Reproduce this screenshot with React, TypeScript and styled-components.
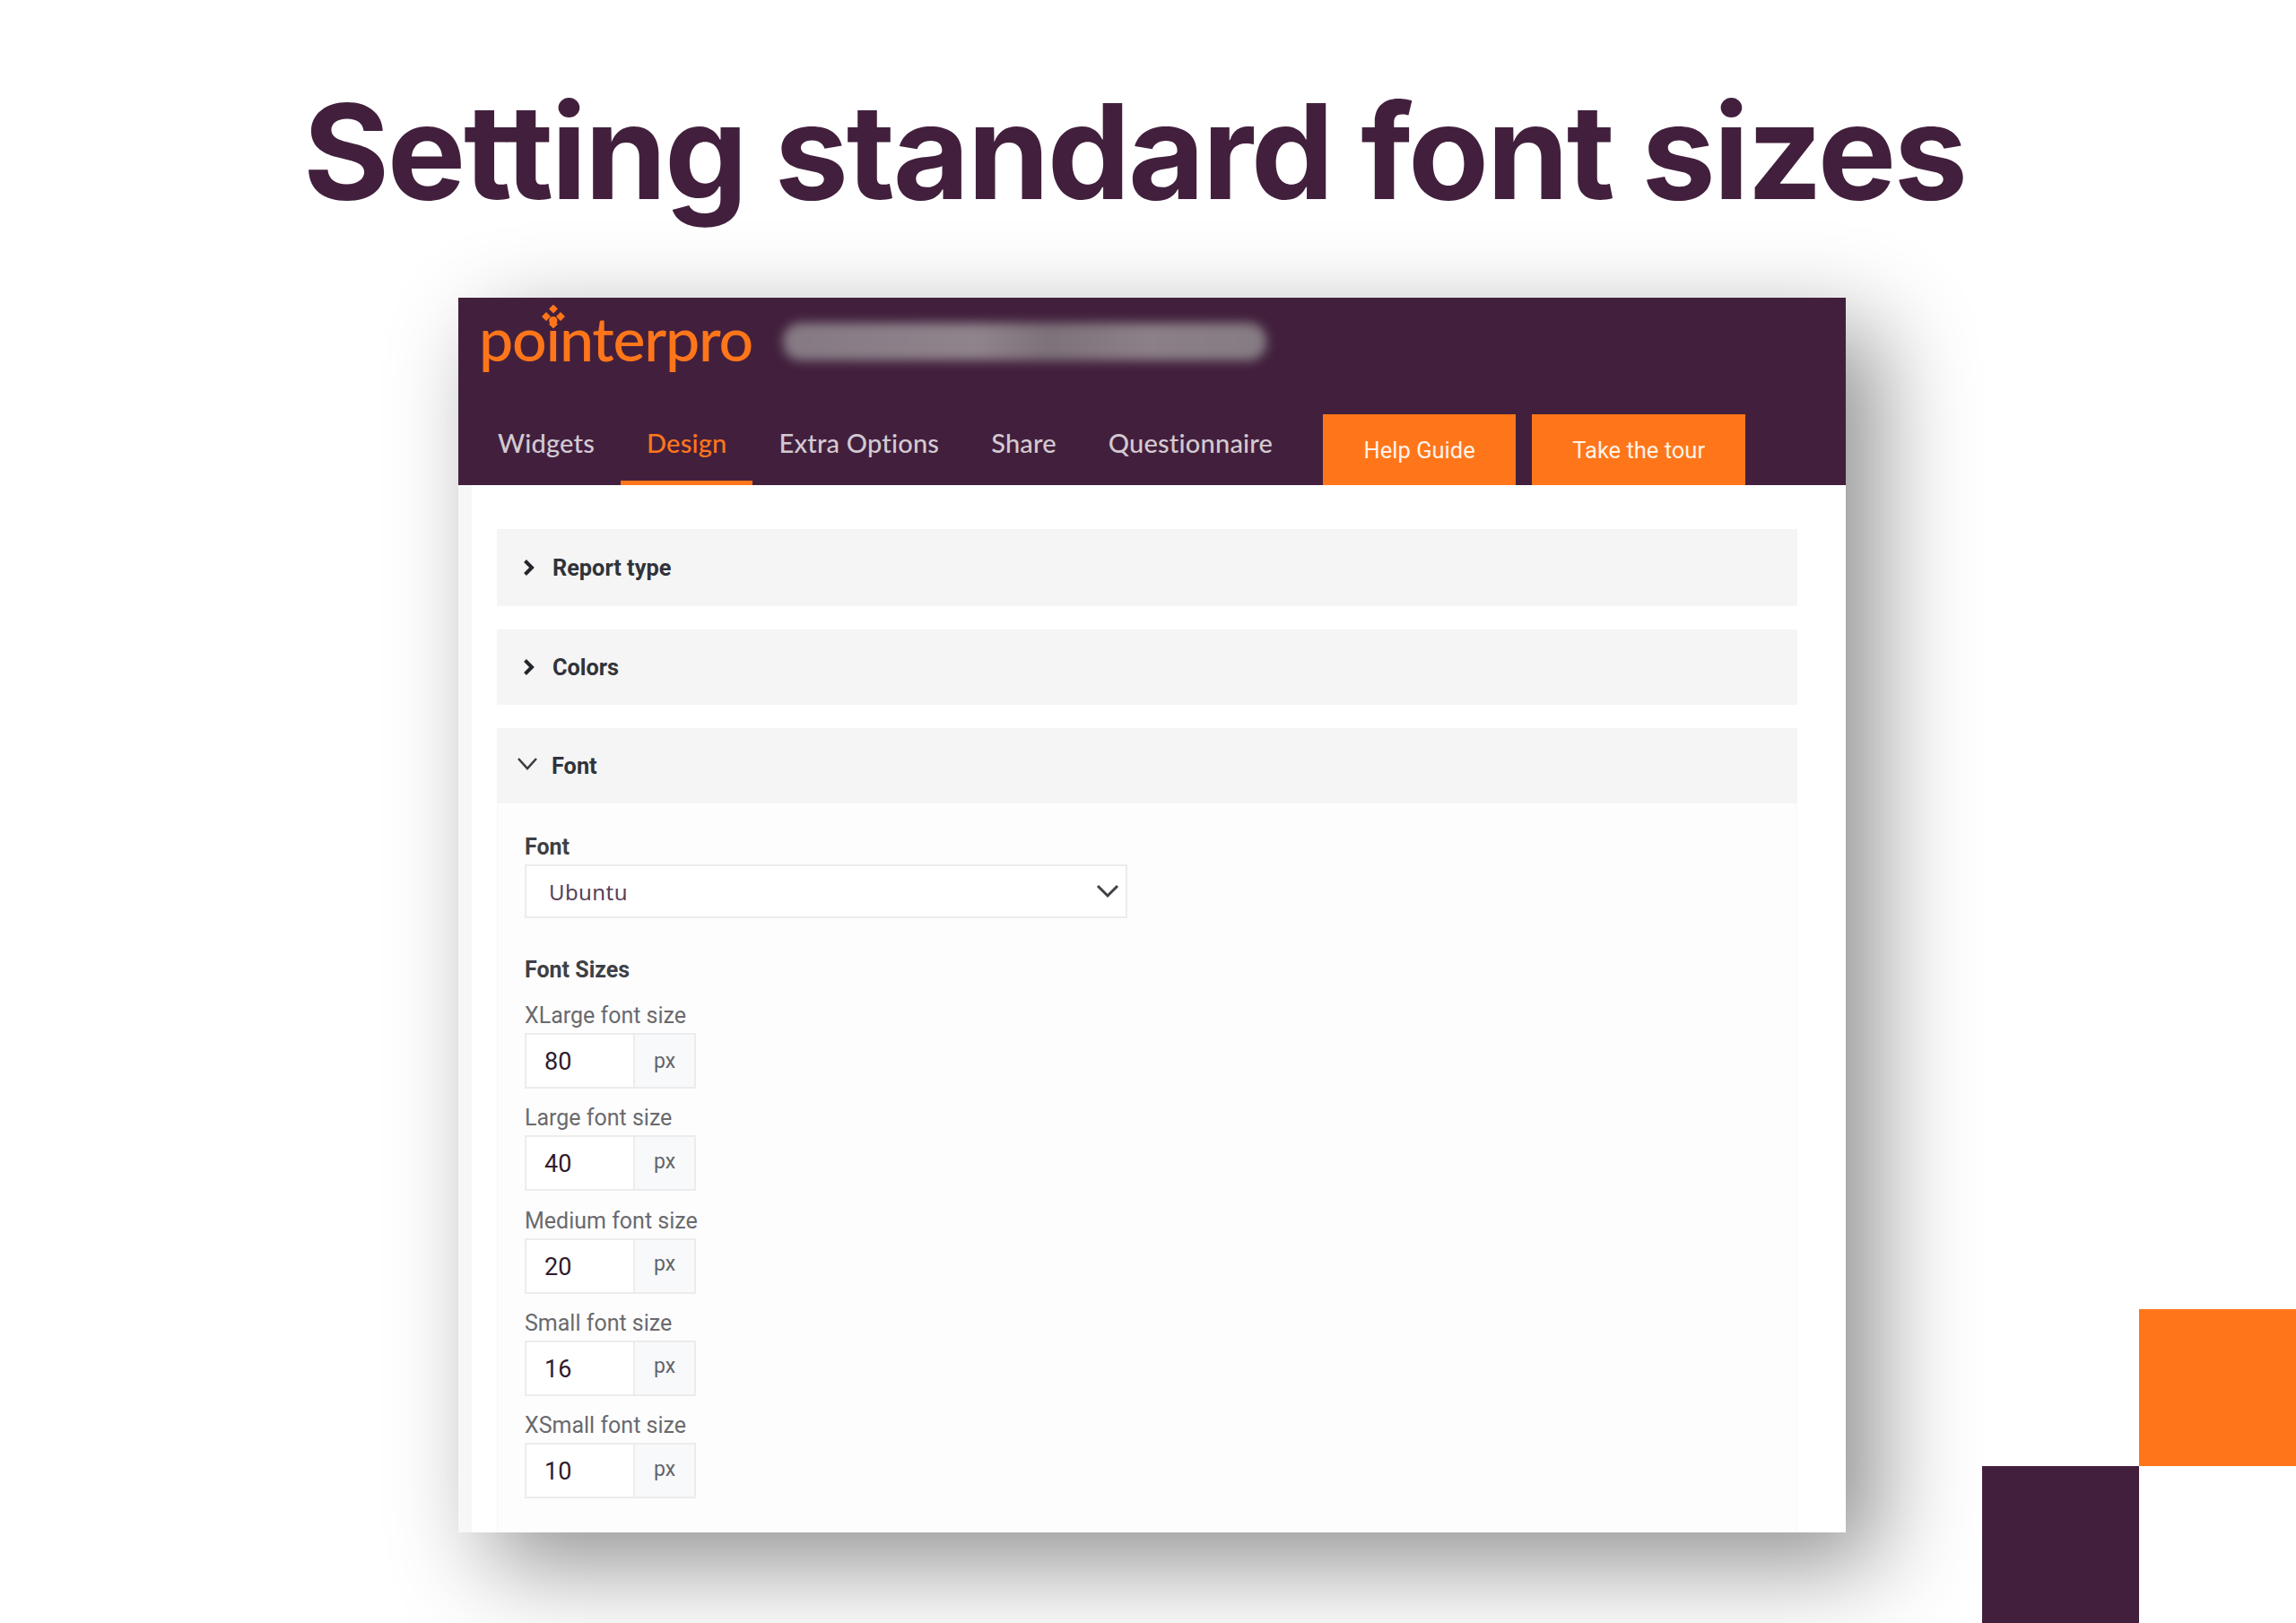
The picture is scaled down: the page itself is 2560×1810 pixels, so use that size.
import React from "react";
import styled, { createGlobalStyle } from "styled-components";

const PURPLE = "#42203d";
const ORANGE = "#ff761a";

const GlobalStyle = createGlobalStyle`
  html, body {
    margin: 0;
    padding: 0;
    background: #ffffff;
  }
`;

const Page = styled.div`
  position: relative;
  width: 2560px;
  height: 1810px;
  overflow: hidden;
  background: #ffffff;
  font-family: Roboto, "Liberation Sans", sans-serif;
`;

const Title = styled.h1`
  margin: 0;
  height: 332px;
  padding: 86px 0 0 338px;
  box-sizing: border-box;
  font-family: Inter, Lato, sans-serif;
  font-weight: 700;
  font-size: 147px;
  line-height: 166px;
  letter-spacing: -2.45px;
  color: ${PURPLE};
  white-space: nowrap;
`;

const Card = styled.section`
  width: 1547px;
  height: 1377px;
  margin-left: 511px;
  background: #ffffff;
  box-shadow: 35px 35px 100px rgba(0, 0, 0, 0.44);
  display: flex;
  flex-direction: column;
`;

const Header = styled.header`
  background: ${PURPLE};
  height: 209px;
  flex: none;
  display: flex;
  flex-direction: column;
  justify-content: space-between;
`;

const Brand = styled.div`
  display: flex;
  align-items: flex-start;
  padding: 25px 0 0 23px;
`;

const LogoWrap = styled.div`
  position: relative;
  width: 339px;
`;

const Logo = styled.span`
  display: block;
  margin-top: -14px;
  font-family: Lato, sans-serif;
  font-weight: 500;
  font-size: 68px;
  line-height: 68px;
  letter-spacing: -1.2px;
  color: ${ORANGE};
`;

const LogoMark = styled.svg`
  position: absolute;
  left: 70px;
  top: -17px;
  width: 26px;
  height: 26px;
`;

const BlurredName = styled.div`
  width: 539px;
  height: 42px;
  margin-top: 3px;
  border-radius: 20px;
  background: linear-gradient(90deg, #857a84 0%, #8f838c 40%, #7d717a 55%, #8b7f88 75%, #857c83 100%);
  filter: blur(6px);
`;

const NavBar = styled.nav`
  display: flex;
  align-items: flex-end;
  padding-left: 15px;
  height: 79px;
`;

const NavItem = styled.a<{ $active?: boolean }>`
  height: 79px;
  padding: 0 29px 12px;
  box-sizing: border-box;
  display: flex;
  align-items: center;
  font-family: Lato, sans-serif;
  font-weight: 500;
  font-size: 29px;
  letter-spacing: 0.2px;
  color: ${(p) => (p.$active ? ORANGE : "#d3c9d1")};
  border-bottom: 5px solid ${(p) => (p.$active ? ORANGE : "transparent")};
`;

const HelpButton = styled.a<{ $width: number; $gap: number }>`
  width: ${(p) => p.$width}px;
  height: 79px;
  margin-left: ${(p) => p.$gap}px;
  display: flex;
  align-items: center;
  justify-content: center;
  padding-top: 1px;
  box-sizing: border-box;
  background: ${ORANGE};
  color: #fff3e8;
  font-size: 25.5px;
`;

const Content = styled.main`
  flex: 1;
  min-height: 0;
  border-left: 15px solid #f7f7f7;
  padding: 49px 54px 0 28px;
  display: flex;
  flex-direction: column;
`;

const SectionHead = styled.div<{ $height: number; $after: number }>`
  height: ${(p) => p.$height}px;
  margin-bottom: ${(p) => p.$after}px;
  flex: none;
  background: #f5f5f5;
  display: flex;
  align-items: center;
  padding-left: 28px;
  gap: 18px;
  font-weight: 700;
  font-size: 25.3px;
  color: #30333a;
`;

const ChevronRight = styled.svg`
  width: 16px;
  height: 22px;
  flex: none;
`;

const ChevronDown = styled.svg`
  width: 26px;
  height: 18px;
  flex: none;
  margin: -4px -3.5px 0 -7.5px;
`;

const FontBody = styled.div`
  flex: 1;
  background: #fdfdfd;
  border-left: 1px solid #f6f6f6;
  border-right: 1px solid #f6f6f6;
  padding: 30px 0 0 30px;
`;

const StrongLabel = styled.div<{ $top?: number; $after?: number }>`
  margin-top: ${(p) => p.$top ?? 0}px;
  margin-bottom: ${(p) => p.$after ?? 0}px;
  line-height: 38px;
  font-weight: 700;
  font-size: 25px;
  color: #3d4045;
`;

const SelectBox = styled.div`
  width: 672px;
  height: 60px;
  box-sizing: border-box;
  background: #fff;
  border: 2px solid #ececec;
  display: flex;
  align-items: center;
  justify-content: space-between;
  padding: 0 6px 0 25px;
  font-family: "Noto Sans", sans-serif;
  font-size: 24px;
  letter-spacing: 0.4px;
  color: #5a4058;
`;

const SelectChevron = styled.svg`
  width: 28px;
  height: 18px;
`;

const Field = styled.div`
  margin-bottom: 14.25px;
`;

const FieldLabel = styled.div`
  line-height: 38px;
  font-size: 25px;
  color: #6a6a6e;
`;

const InputGroup = styled.div`
  width: 191px;
  height: 62px;
  box-sizing: border-box;
  display: flex;
  border: 2px solid #ececec;
  background: #fff;
`;

const NumberValue = styled.div`
  width: 119px;
  flex: none;
  box-sizing: border-box;
  padding: 2px 0 0 20px;
  display: flex;
  align-items: center;
  font-size: 27px;
  color: #2f1b2e;
`;

const Unit = styled.div<{ $lift?: boolean }>`
  flex: 1;
  display: flex;
  align-items: center;
  justify-content: center;
  padding-bottom: ${(p) => (p.$lift ? 4 : 0)}px;
  background: #f8f9fa;
  border-left: 2px solid #ececec;
  font-size: 23px;
  color: #63656a;
`;

const CornerOrange = styled.div`
  position: absolute;
  left: 2385px;
  top: 1460px;
  width: 175px;
  height: 175px;
  background: ${ORANGE};
`;

const CornerPurple = styled.div`
  position: absolute;
  left: 2210px;
  top: 1635px;
  width: 175px;
  height: 175px;
  background: ${PURPLE};
`;

const fontSizes = [
  { label: "XLarge font size", value: 80, lift: false },
  { label: "Large font size", value: 40, lift: true },
  { label: "Medium font size", value: 20, lift: true },
  { label: "Small font size", value: 16, lift: true },
  { label: "XSmall font size", value: 10, lift: true },
];

const navItems = ["Widgets", "Design", "Extra Options", "Share", "Questionnaire"];

const RightIcon = () => (
  <ChevronRight viewBox="0 0 16 22">
    <path d="M3.5 3.5l7.5 7.5-7.5 7.5" fill="none" stroke="#23262b" strokeWidth="4" />
  </ChevronRight>
);

const App: React.FC = () => {
  return (
    <Page>
      <GlobalStyle />
      <Title>Setting standard font sizes</Title>
      <Card>
        <Header>
          <Brand>
            <LogoWrap>
              <LogoMark viewBox="0 0 26 26">
                <g fill={ORANGE}>
                  <rect x="9.5" y="1" width="7" height="7" transform="rotate(45 13 4.5)" />
                  <rect x="1.5" y="9.5" width="7" height="7" transform="rotate(45 5 13)" />
                  <rect x="17.5" y="9.5" width="7" height="7" transform="rotate(45 21 13)" />
                  <rect x="9.5" y="18" width="7" height="7" transform="rotate(45 13 21.5)" />
                </g>
              </LogoMark>
              <Logo>pointerpro</Logo>
            </LogoWrap>
            <BlurredName />
          </Brand>
          <NavBar>
            {navItems.map((item) => (
              <NavItem key={item} $active={item === "Design"}>
                {item}
              </NavItem>
            ))}
            <HelpButton $width={215} $gap={27}>Help Guide</HelpButton>
            <HelpButton $width={238} $gap={18}>Take the tour</HelpButton>
          </NavBar>
        </Header>
        <Content>
          <SectionHead $height={86} $after={26}>
            <RightIcon />
            Report type
          </SectionHead>
          <SectionHead $height={84} $after={26}>
            <RightIcon />
            Colors
          </SectionHead>
          <SectionHead $height={84} $after={0}>
            <ChevronDown viewBox="0 0 26 18">
              <path d="M3 3l10 11L23 3" fill="none" stroke="#3a3d42" strokeWidth="2.6" />
            </ChevronDown>
            Font
          </SectionHead>
          <FontBody>
            <StrongLabel>Font</StrongLabel>
            <SelectBox>
              Ubuntu
              <SelectChevron viewBox="0 0 28 18">
                <path d="M3 3l11 11L25 3" fill="none" stroke="#3f3f45" strokeWidth="3" />
              </SelectChevron>
            </SelectBox>
            <StrongLabel $top={39} $after={13}>Font Sizes</StrongLabel>
            {fontSizes.map((f) => (
              <Field key={f.label}>
                <FieldLabel>{f.label}</FieldLabel>
                <InputGroup>
                  <NumberValue>{f.value}</NumberValue>
                  <Unit $lift={f.lift}>px</Unit>
                </InputGroup>
              </Field>
            ))}
          </FontBody>
        </Content>
      </Card>
      <CornerOrange />
      <CornerPurple />
    </Page>
  );
};

export default App;
